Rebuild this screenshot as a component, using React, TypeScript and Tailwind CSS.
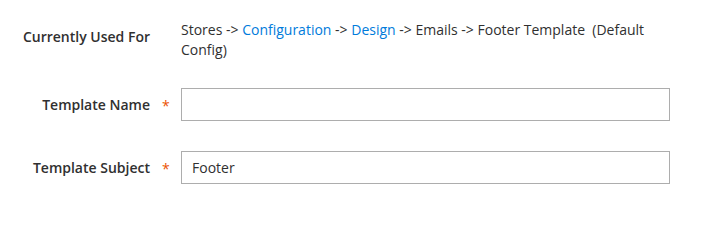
export default function App() {
  return (
    <main className="min-h-screen bg-white pt-[20px] font-['Open_Sans',sans-serif] text-[14px] leading-[20px] text-[#303030]">
      <div className="flex items-start">
        <div className="w-[150px] shrink-0 pt-[7px] text-right font-semibold">
          Currently Used For
        </div>
        <div className="ml-[31px] w-[489px]">
          Stores -&gt; <span className="text-[#007bdb]">Configuration</span> -&gt;{" "}
          <span className="text-[#007bdb]">Design</span> -&gt; Emails -&gt; Footer Template{"\u00a0"} (Default Config)
        </div>
      </div>

      <div className="mt-[28px] flex items-center">
        <label className="w-[150px] shrink-0 text-right font-semibold">Template Name</label>
        <span className="w-[31px] shrink-0 pl-[12px] pt-[2px] text-[#eb5202]">*</span>
        <input
          type="text"
          className="h-[33px] w-[489px] border border-[#adadad] bg-white px-[10px] text-[14px] text-[#303030] outline-none"
        />
      </div>

      <div className="mt-[30px] flex items-center">
        <label className="w-[150px] shrink-0 text-right font-semibold">Template Subject</label>
        <span className="w-[31px] shrink-0 pl-[12px] pt-[2px] text-[#eb5202]">*</span>
        <input
          type="text"
          defaultValue="Footer"
          className="h-[33px] w-[489px] border border-[#adadad] bg-white px-[10px] text-[14px] text-[#303030] outline-none"
        />
      </div>
    </main>
  );
}
